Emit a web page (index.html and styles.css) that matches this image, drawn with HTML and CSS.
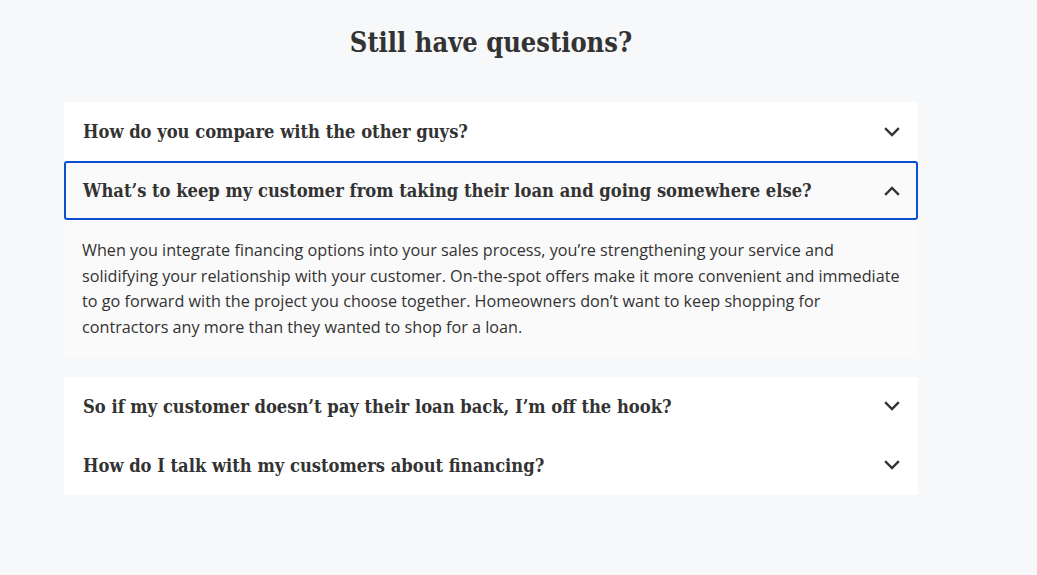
FILE: index.html
```html
<!DOCTYPE html>
<html lang="en">
<head>
<meta charset="utf-8">
<title>Still have questions?</title>
<link rel="stylesheet" href="styles.css">
</head>
<body>
<section class="faq">
  <h2 class="faq-title">Still have questions?</h2>
  <div class="faq-list">
    <div class="faq-item">
      <button class="faq-q">
        <span class="faq-q-text">How do you compare with the other guys?</span>
        <svg class="chev" viewBox="0 0 16 10" width="16" height="10"><path d="M2 2 L8 8 L14 2" fill="none" stroke="#333" stroke-width="2.4" stroke-linecap="square"/></svg>
      </button>
    </div>
    <div class="faq-item open">
      <button class="faq-q active">
        <span class="faq-q-text">What’s to keep my customer from taking their loan and going somewhere else?</span>
        <svg class="chev" viewBox="0 0 16 10" width="16" height="10"><path d="M2 8 L8 2 L14 8" fill="none" stroke="#333" stroke-width="2.4" stroke-linecap="square"/></svg>
      </button>
      <div class="faq-a">
        <p>When you integrate financing options into your sales process, you’re strengthening your service and solidifying your relationship with your customer. On-the-spot offers make it more convenient and immediate to go forward with the project you choose together. Homeowners don’t want to keep shopping for contractors any more than they wanted to shop for a loan.</p>
      </div>
    </div>
    <div class="faq-item">
      <button class="faq-q">
        <span class="faq-q-text">So if my customer doesn’t pay their loan back, I’m off the hook?</span>
        <svg class="chev" viewBox="0 0 16 10" width="16" height="10"><path d="M2 2 L8 8 L14 2" fill="none" stroke="#333" stroke-width="2.4" stroke-linecap="square"/></svg>
      </button>
    </div>
    <div class="faq-item">
      <button class="faq-q">
        <span class="faq-q-text">How do I talk with my customers about financing?</span>
        <svg class="chev" viewBox="0 0 16 10" width="16" height="10"><path d="M2 2 L8 8 L14 2" fill="none" stroke="#333" stroke-width="2.4" stroke-linecap="square"/></svg>
      </button>
    </div>
  </div>
</section>
</body>
</html>
```

FILE: styles.css
```css
html, body {
  margin: 0;
  padding: 0;
  background: #f7f8fa;
  height: 100%;
}

.faq {
  width: 854px;
  margin: 0 0 0 64px;
  padding-top: 25px;
}

.faq-title {
  margin: 0 0 41px;
  text-align: center;
  font-family: "DejaVu Serif Condensed", "DejaVu Serif", serif;
  font-weight: bold;
  font-size: 27px;
  line-height: 36px;
  color: #333333;
}

.faq-list {
  display: flex;
  flex-direction: column;
}

.faq-item {
  background: #ffffff;
}

.faq-item.open {
  background: #fafafa;
  margin-bottom: 19px;
}

.faq-q {
  display: flex;
  align-items: center;
  justify-content: space-between;
  width: 100%;
  height: 59px;
  box-sizing: border-box;
  padding: 0 16px 0 17px;
  margin: 0;
  border: 2px solid transparent;
  border-radius: 3px;
  background: transparent;
  cursor: pointer;
  text-align: left;
}

.faq-q.active {
  border-color: #0b50d0;
  background: #fafafa;
}

.faq-q-text {
  font-family: "DejaVu Serif Condensed", "DejaVu Serif", serif;
  font-weight: bold;
  font-size: 18.2px;
  color: #333333;
}

.chev {
  display: block;
  flex: none;
}

.faq-a {
  padding: 18px 14px 17px 18px;
}

.faq-a p {
  margin: 0;
  font-family: "Open Sans", sans-serif;
  font-size: 16.2px;
  line-height: 25.7px;
  color: #333333;
}
```
